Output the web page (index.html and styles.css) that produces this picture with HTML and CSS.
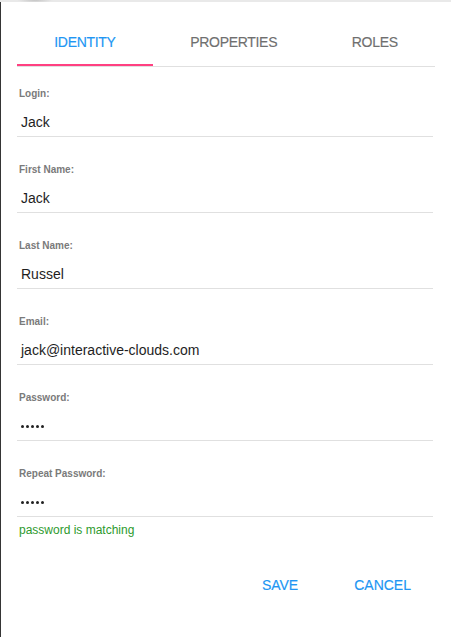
FILE: index.html
```html
<!DOCTYPE html>
<html>
<head>
<meta charset="utf-8">
<link rel="stylesheet" href="styles.css">
</head>
<body>
<div class="topbar"></div>
<div class="dialog">
  <div class="tabs">
    <div class="tab active">IDENTITY</div>
    <div class="tab">PROPERTIES</div>
    <div class="tab">ROLES</div>
  </div>
  <div class="form">
    <div class="field">
      <div class="label">Login:</div>
      <div class="value">Jack</div>
    </div>
    <div class="field">
      <div class="label">First Name:</div>
      <div class="value">Jack</div>
    </div>
    <div class="field">
      <div class="label">Last Name:</div>
      <div class="value">Russel</div>
    </div>
    <div class="field">
      <div class="label">Email:</div>
      <div class="value">jack@interactive-clouds.com</div>
    </div>
    <div class="field">
      <div class="label">Password:</div>
      <div class="value dots"><i></i><i></i><i></i><i></i><i></i></div>
    </div>
    <div class="field">
      <div class="label">Repeat Password:</div>
      <div class="value dots"><i></i><i></i><i></i><i></i><i></i></div>
      <div class="hint">password is matching</div>
    </div>
  </div>
  <div class="actions">
    <div class="btn">SAVE</div>
    <div class="btn">CANCEL</div>
  </div>
</div>
</body>
</html>
```
FILE: styles.css
```css
html, body {
  margin: 0;
  padding: 0;
  background: #fff;
  font-family: "Liberation Sans", Arial, Helvetica, sans-serif;
}
.topbar {
  height: 2px;
  background: radial-gradient(ellipse 18px 3px at 35px 0, #c4c4c4 0%, #e9e9e9 100%);
  background-color: #e9e9e9;
}
.dialog {
  height: 635px;
  box-sizing: border-box;
  border-left: 1px solid #353535;
  padding: 16px 16px 0 16px;
}
.tabs {
  display: flex;
  height: 48px;
  border-bottom: 1px solid #e0e0e0;
}
.tab {
  flex: 1 1 auto;
  display: flex;
  align-items: center;
  justify-content: center;
  font-size: 14px;
  letter-spacing: -0.3px;
  color: #6f6f6f;
  -webkit-text-stroke: 0.15px currentColor;
}
.tab.active {
  color: #2196f3;
  background: linear-gradient(#ff4081, #ff4081) left bottom / 100% 2px no-repeat;
}
.form {
  display: flex;
  flex-direction: column;
  gap: 27px;
  padding-top: 21px;
  margin-right: 2px;
}
.label {
  font-size: 10px;
  line-height: 12px;
  font-weight: bold;
  color: #7a7a7a;
  padding-left: 2px;
  margin-bottom: 12px;
}
.value {
  font-size: 14px;
  line-height: 20px;
  height: 20px;
  color: #1e1e1e;
  padding: 0 0 4px 4px;
  border-bottom: 1px solid #e0e0e0;
}
.dots {
  display: flex;
  align-items: center;
  gap: 2px;
}
.dots i {
  width: 3px;
  height: 3px;
  border-radius: 50%;
  background: #222;
}
.hint {
  font-size: 12px;
  line-height: 14px;
  color: #2d9a2d;
  padding-left: 2px;
  margin-top: 6px;
}
.actions {
  display: flex;
  justify-content: flex-end;
  gap: 24px;
  margin-top: 30px;
  padding-right: 8px;
}
.btn {
  min-width: 64px;
  box-sizing: border-box;
  height: 36px;
  line-height: 36px;
  padding: 0 16px;
  text-align: center;
  font-size: 14px;
  color: #2196f3;
  -webkit-text-stroke: 0.15px currentColor;
}
```
